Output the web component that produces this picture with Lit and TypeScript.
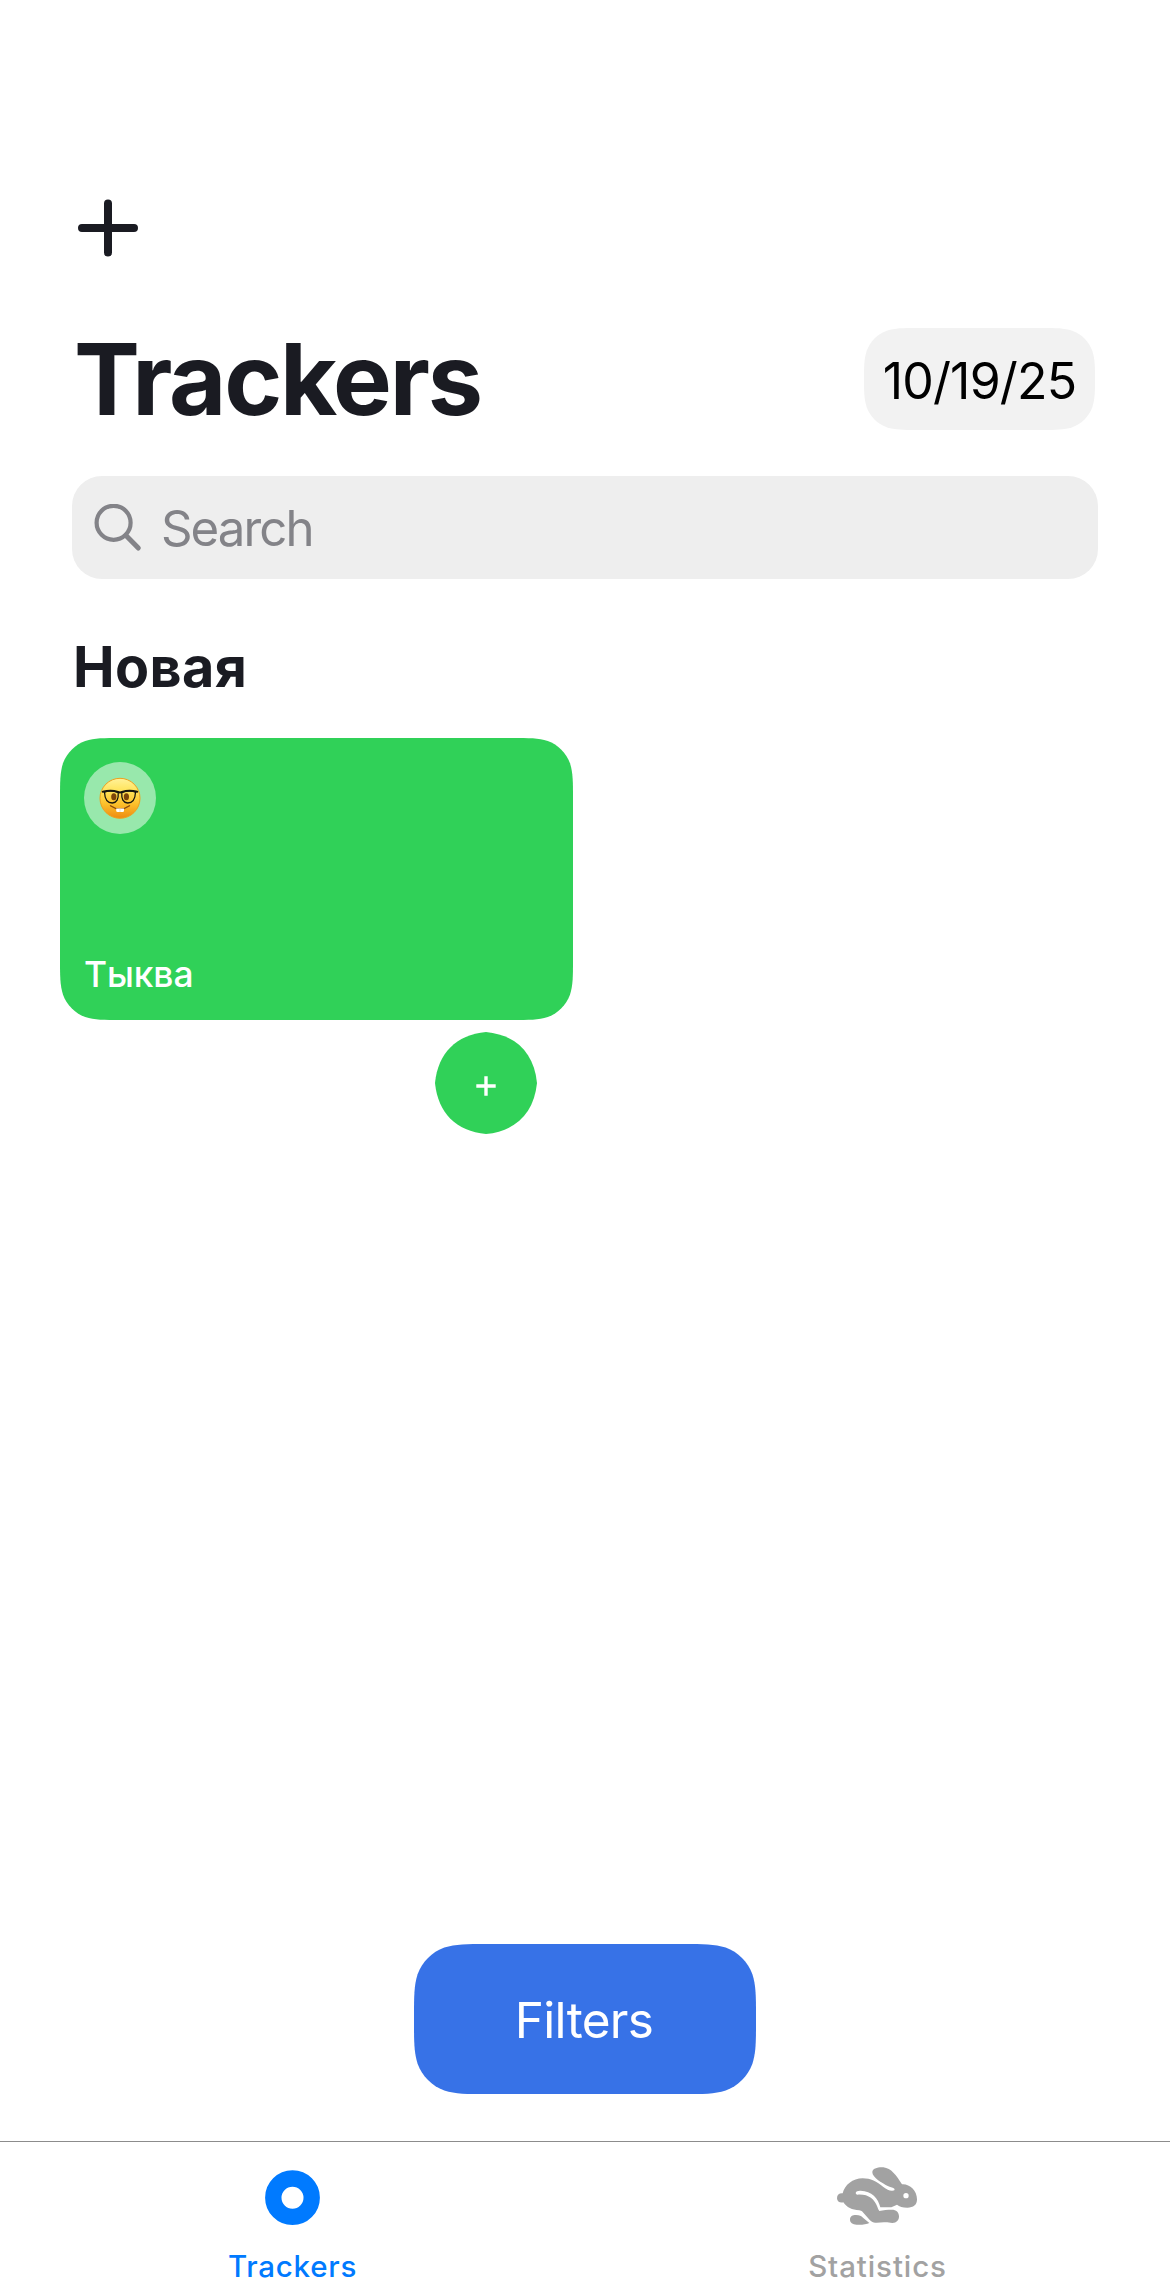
import { LitElement, html, css, unsafeCSS } from "lit";
import { customElement } from "lit/decorators.js";

/** Outline of a w×h rectangle with continuous (smoothed) corners of radius r. */
function smoothRect(w: number, h: number, r: number) {
  const m = Math.min(w, h) / 2;
  const a = Math.min(1.52866 * r, m);
  const b = Math.min(1.08849 * r, m);
  const c = 0.86841 * r;
  const d = 0.63149 * r;
  const e = 0.07491 * r;
  const f = 0.37282 * r;
  const g = 0.16906 * r;
  const p = [
    `M${a} 0L${w - a} 0`,
    `C${w - b} 0 ${w - c} 0 ${w - d} ${e}`,
    `C${w - f} ${g} ${w - g} ${f} ${w - e} ${d}`,
    `C${w} ${c} ${w} ${b} ${w} ${a}L${w} ${h - a}`,
    `C${w} ${h - b} ${w} ${h - c} ${w - e} ${h - d}`,
    `C${w - g} ${h - f} ${w - f} ${h - g} ${w - d} ${h - e}`,
    `C${w - c} ${h} ${w - b} ${h} ${w - a} ${h}L${a} ${h}`,
    `C${b} ${h} ${c} ${h} ${d} ${h - e}`,
    `C${f} ${h - g} ${g} ${h - f} ${e} ${h - d}`,
    `C0 ${h - c} 0 ${h - b} 0 ${h - a}L0 ${a}`,
    `C0 ${b} 0 ${c} ${e} ${d}`,
    `C${g} ${f} ${f} ${g} ${d} ${e}`,
    `C${c} 0 ${b} 0 ${a} 0Z`,
  ];
  return unsafeCSS(`path("${p.join("")}")`);
}

@customElement("tracker-card")
class TrackerCard extends LitElement {
  static styles = css`
    :host { display: block; width: 513px; }
    .card {
      box-sizing: border-box;
      height: 282px;
      padding: 24px;
      background: #30d158;
      clip-path: ${smoothRect(513, 282, 40)};
      display: flex;
      flex-direction: column;
      justify-content: space-between;
    }
    .emoji {
      width: 72px;
      height: 72px;
      border-radius: 50%;
      background: rgba(255, 255, 255, 0.5);
      display: flex;
      align-items: center;
      justify-content: center;
    }
    .name {
      color: #fff;
      font-size: 35.4px;
      font-weight: 500;
      line-height: 42px;
      letter-spacing: -0.1px;
    }
    .actions { display: flex; justify-content: flex-end; padding: 12px 36px 0 0; }
    .done {
      width: 102px;
      height: 102px;
      border: 0;
      padding: 0;
      background: #30d158;
      clip-path: path("M51 0C81 3 99 21 102 51C99 81 81 99 51 102C21 99 3 81 0 51C3 21 21 3 51 0Z");
      display: flex;
      align-items: center;
      justify-content: center;
    }
    .done svg { margin-top: 5px; margin-right: 1px; }
    svg { display: block; }
  `;

  render() {
    return html`
      <div class="card">
        <div class="emoji">
          <svg width="42" height="42" viewBox="0 0 42 42">
            <defs>
              <linearGradient id="face" x1="0" y1="0" x2="0" y2="1">
                <stop offset="0" stop-color="#fff29a" />
                <stop offset="0.3" stop-color="#ffe45c" />
                <stop offset="0.65" stop-color="#fcbf2a" />
                <stop offset="1" stop-color="#ee8a12" />
              </linearGradient>
            </defs>
            <circle cx="21" cy="21.3" r="20" fill="url(#face)" stroke="#eda01f" stroke-width="1" />
            <ellipse cx="14.8" cy="19.8" rx="2.6" ry="3.5" fill="#7c4508" />
            <ellipse cx="27.4" cy="19.8" rx="2.6" ry="3.5" fill="#7c4508" />
            <path d="M11.5 28.8Q21 35.5 30.5 28.8" fill="none" stroke="#8a4a0c" stroke-width="1.4" stroke-linecap="round" />
            <path d="M17.2 31.5H25V33.8Q25 35 23.6 35H18.6Q17.2 35 17.2 33.8Z" fill="#fff" />
            <path d="M21 31.5V35" stroke="#d8c9b8" stroke-width=".6" />
            <path d="M5.5 15.2Q12 12.6 19.2 15.5Q20 25.5 13.3 26Q6 26 5.5 15.2ZM22.8 15.5Q30 12.6 36.5 15.2Q36 26 28.7 26Q22 25.5 22.8 15.5Z" fill="none" stroke="#17160f" stroke-width="1.3" />
            <path d="M3.8 14.8Q12 12.4 19 15Q21 15.8 23 15Q30 12.4 38.2 14.8" fill="none" stroke="#17160f" stroke-width="2" stroke-linecap="round" />
          </svg>
        </div>
        <div class="name">Тыква</div>
      </div>
      <div class="actions">
        <button class="done" aria-label="+">
          <svg width="20" height="20" viewBox="0 0 20 20"><path d="M10 .3V19.7M.3 10H19.7" stroke="#fff" stroke-width="3.4" /></svg>
        </button>
      </div>
    `;
  }
}

@customElement("tab-bar")
class TabBar extends LitElement {
  static styles = css`
    :host { display: flex; height: 148px; box-sizing: border-box; border-top: 1px solid #8c8c8c; }
    .tab {
      flex: 1;
      display: flex;
      flex-direction: column;
      align-items: center;
      padding-top: 13px;
      color: #a2a2a2;
      font-size: 29.5px;
      font-weight: 500;
      line-height: 36px;
      letter-spacing: 0.9px;
    }
    .active { color: #007aff; letter-spacing: 0.75px; }
    .icon { display: block; height: 80px; margin-bottom: 13px; }
    .hare { margin-left: 4px; }
  `;

  render() {
    return html`
      <div class="tab active">
        <svg class="icon" width="56" height="80" viewBox="0 0 56 80">
          <circle cx="27.5" cy="42.7" r="19.2" fill="none" stroke="currentColor" stroke-width="16.4" />
        </svg>
        <span>Trackers</span>
      </div>
      <div class="tab">
        <svg class="icon hare" width="120" height="80" viewBox="0 0 360 240">
          <g fill="currentColor">
            <path d="M68 115C74 90 98 70 128 70C152 70 170 80 190 96C200 104 210 108 217 107C223 107 225 104 223 101C220 98 213 98 205 94C185 84 157 67 157 52C157 40 174 36 190 37C214 40 228 60 246 88C268 86 291 106 291 133C291 150 280 158 262 158C248 158 238 155 231 149L214 157L181 157C175 130 155 108 122 107C106 106 103 117 113 119C145 117 163 132 172 155Q174 163 178 168C190 165 203 164 215 164C229 164 237 172 237 184C237 196 230 204 217 204C208 204 203 201 192 202L170 203C161 204 156 202 150 196L126 169Q124 167 118 166C96 165 80 157 70 142C60 144 51 140 51 130C51 119 58 114 68 115Z" />
            <path d="M108 180C119 180 124 183 129 188L148 204C140 209 120 210 110 209C98 208 90 203 90 194C90 184 97 180 108 180Z" />
          </g>
          <circle cx="258" cy="122" r="8" fill="#fff" />
        </svg>
        <span>Statistics</span>
      </div>
    `;
  }
}

@customElement("app-root")
class AppRoot extends LitElement {
  static styles = css`
    :host {
      display: flex;
      flex-direction: column;
      box-sizing: border-box;
      width: 1170px;
      height: 2289px;
      overflow: hidden;
      background: #fff;
      color: #1a1b22;
      font-family: Inter, "Liberation Sans", sans-serif;
    }
    svg { display: block; }
    .nav { padding: 198px 0 0 76px; height: 60px; }
    .heading {
      display: flex;
      align-items: center;
      justify-content: space-between;
      height: 102px;
      margin: 70px 75px 0 74px;
    }
    h1 { margin: 0; font-size: 98.8px; line-height: 102px; font-weight: 700; letter-spacing: -2.15px; }
    .date {
      width: 231px;
      height: 102px;
      box-sizing: border-box;
      padding-top: 3px;
      background: #f2f2f2;
      clip-path: ${smoothRect(231, 102, 36)};
      color: #000;
      font-size: 50px;
      line-height: 100px;
      text-align: center;
      letter-spacing: -0.8px;
    }
    .search {
      display: flex;
      align-items: center;
      height: 103px;
      margin: 46px 72px 0;
      padding-left: 22px;
      gap: 19px;
      border-radius: 30px;
      background: #eeeeee;
      color: #838388;
      font-size: 49.2px;
      letter-spacing: -1.95px;
    }
    h2 { margin: 58px 0 0 73px; font-size: 55.7px; line-height: 60px; font-weight: 700; letter-spacing: 0.4px; }
    .grid { flex: 1; padding: 41px 60px 0; }
    .footer { display: flex; justify-content: center; padding-bottom: 47px; }
    .filters {
      width: 342px;
      height: 150px;
      border: 0;
      padding: 2px 2px 0 0;
      background: #3772e7;
      clip-path: ${smoothRect(342, 150, 48)};
      color: #fff;
      font: 400 49.5px/148px Inter, "Liberation Sans", sans-serif;
      letter-spacing: -0.7px;
    }
  `;

  render() {
    return html`
      <div class="nav">
        <svg width="64" height="60" viewBox="0 0 64 60">
          <path d="M32 5.5V54.5M6 30H58" stroke="#1a1b22" stroke-width="8" stroke-linecap="round" />
        </svg>
      </div>
      <div class="heading">
        <h1>Trackers</h1>
        <div class="date">10/19/25</div>
      </div>
      <div class="search">
        <svg width="48" height="48" viewBox="0 0 48 48" fill="none" stroke="currentColor" stroke-linecap="round">
          <circle cx="19.6" cy="18.8" r="17" stroke-width="4.2" />
          <path d="M32 31.5L44.3 44" stroke-width="5" />
        </svg>
        <span>Search</span>
      </div>
      <h2>Новая</h2>
      <div class="grid"><tracker-card></tracker-card></div>
      <div class="footer"><button class="filters">Filters</button></div>
      <tab-bar></tab-bar>
    `;
  }
}
